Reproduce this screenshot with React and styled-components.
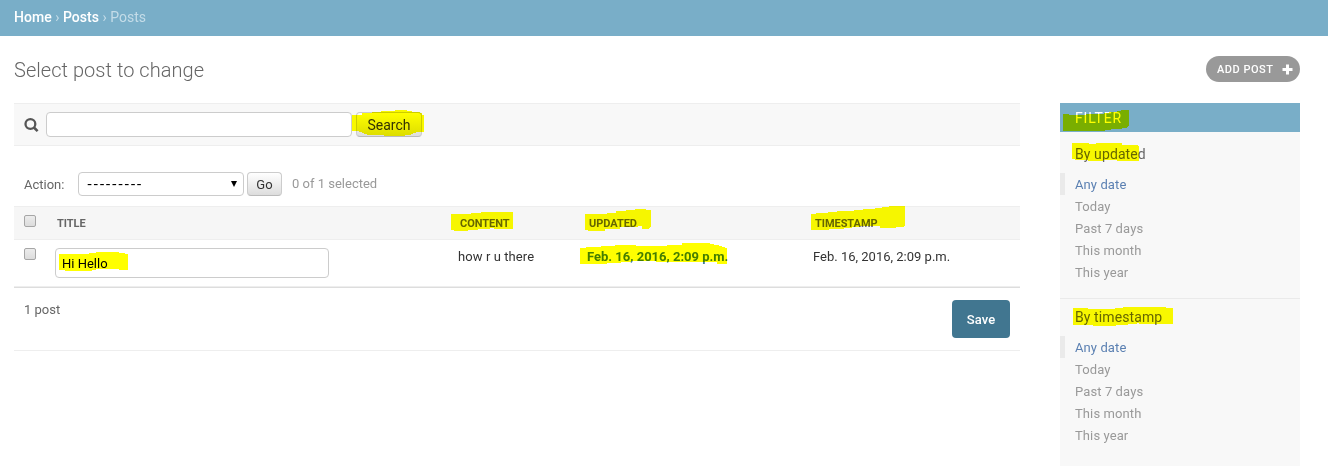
import React from "react";
import styled, { createGlobalStyle } from "styled-components";

const Global = createGlobalStyle`
  *, *::before, *::after { box-sizing: border-box; }
  body { margin: 0; background: #fff; overflow: hidden; }
  body, input, button { font-family: Roboto, "Liberation Sans", sans-serif; }
`;

const Page = styled.div`
  position: relative;
  width: 1328px;
  height: 469px;
  overflow: hidden;
  font-size: 13px;
  color: #333;
`;
const Text = styled.span`
  letter-spacing: ${(p) => p.$ls || 0}px;
  white-space: nowrap;
`;
const Dashes = styled.span`
  font-family: "DejaVu Sans", sans-serif;
  font-size: 14px;
  letter-spacing: 1.15px;
`;
const Breadcrumbs = styled.nav`
  height: 36px;
  padding: 0 14px;
  background: #79aec8;
  color: #c4dce8;
  font-size: 14px;
  line-height: 34px;
  letter-spacing: 0.03px;
  white-space: pre;
`;
const Crumb = styled.a`
  color: #fff;
  font-weight: 500;
`;
const TitleBar = styled.header`
  display: flex;
  justify-content: space-between;
  height: 67px;
  padding: 20px 28px 0 14px;
`;
const Title = styled.h1`
  margin: 0;
  font-size: 20px;
  font-weight: 300;
  line-height: 28px;
  letter-spacing: 0.04px;
  color: #666;
`;
const AddButton = styled.a`
  display: flex;
  align-items: center;
  justify-content: space-between;
  width: 94px;
  height: 26px;
  padding: 0 7px 0 11px;
  border-radius: 13px;
  background: #999;
  color: #fff;
  font-size: 11px;
  font-weight: 500;
`;
const Content = styled.div`
  display: flex;
  gap: 40px;
  padding-left: 14px;
`;
const Main = styled.main`
  width: 1006px;
`;
const Toolbar = styled.div`
  display: flex;
  align-items: center;
  height: 43px;
  padding-left: 10px;
  border-top: 1px solid #eee;
  border-bottom: 1px solid #eee;
  background: #f8f8f8;
`;
const Field = styled.input`
  display: block;
  width: ${(p) => p.$w}px;
  height: ${(p) => p.$h}px;
  margin: 0;
  padding: 0 6px;
  border: 1px solid #ccc;
  border-radius: 4px;
  background: #fff;
  color: #000;
  font-size: 13px;
  outline: none;
`;
const Button = styled.button`
  width: ${(p) => p.$w}px;
  height: ${(p) => p.$h}px;
  margin-left: ${(p) => p.$gap}px;
  padding: 1px 0 0;
  border: 1px solid #ccc;
  border-bottom-color: #bbb;
  border-radius: 4px;
  background: linear-gradient(#fff, #ddd);
  color: #333;
  font-size: ${(p) => p.$size}px;
`;
const Actions = styled.div`
  display: flex;
  align-items: center;
  height: 60px;
  padding: 16px 10px 0;
  color: #666;
`;
const ActionLabel = styled.label`
  width: 54px;
`;
const Select = styled.div`
  display: flex;
  align-items: center;
  justify-content: space-between;
  width: 166px;
  height: 24px;
  padding: 0 6px 0 8px;
  border: 1px solid #ccc;
  border-radius: 4px;
  color: #000;
`;
const Counter = styled.span`
  margin: -2px 0 0 10px;
  color: #999;
`;
const Row = styled.div`
  display: grid;
  grid-template-columns: 41px 403px 129px 226px 1fr;
  height: ${(p) => (p.$head ? 34 : 47)}px;
  border-top: ${(p) => (p.$head ? "1px solid #eee" : "0")};
  border-bottom: 1px solid #eee;
  background: ${(p) => (p.$head ? "#f6f6f6" : "#fff")};
`;
const HeadCell = styled.div`
  padding-left: 2px;
  line-height: 33px;
  font-size: 11px;
  font-weight: 700;
  letter-spacing: -0.05px;
  color: #666;
`;
const Cell = styled.div`
  line-height: 17px;
  padding-top: 8px;
  color: #333;
  font-weight: ${(p) => (p.$link ? 700 : 400)};
  ${(p) => p.$link && "color: #447e9b;"}
`;
const Check = styled.input`
  appearance: none;
  display: block;
  width: 12px;
  height: 12px;
  margin: 8px 0 0 10px;
  border: 1px solid #a6a6a6;
  border-radius: 2px;
  background: linear-gradient(#ececec, #dcdcdc);
`;
const Paginator = styled.footer`
  display: flex;
  justify-content: space-between;
  height: 64px;
  padding: 12px 10px 0;
  border-top: 1px solid #ddd;
  border-bottom: 1px solid #eee;
  color: #666;
  line-height: 20px;
`;
const Save = styled.button`
  width: 58px;
  height: 38px;
  padding: 0;
  border: 0;
  border-radius: 4px;
  background: #417690;
  color: #fff;
  font-size: 13px;
  font-weight: 500;
  letter-spacing: 0.1px;
`;
const Sidebar = styled.aside`
  width: 240px;
  height: 363px;
  background: #f8f8f8;
`;
const FilterTitle = styled.h2`
  height: 29px;
  margin: 0;
  padding-left: 15px;
  background: #79aec8;
  color: #fff;
  font-size: 14px;
  font-weight: 400;
  letter-spacing: 0.8px;
  line-height: 30px;
`;
const FilterGroup = styled.section`
  height: 167px;
  border-bottom: ${(p) => (p.$last ? "0" : "1px solid #eaeaea")};
  & + & { margin-top: -4px; }
`;
const FilterHeading = styled.h3`
  margin: 0;
  padding: 12px 15px 0;
  height: 41px;
  font-size: 14px;
  font-weight: 400;
  line-height: 20px;
  color: #666;
`;
const Choice = styled.a`
  display: block;
  height: 22px;
  line-height: 24px;
  padding-left: 10px;
  border-left: 5px solid ${(p) => (p.$on ? "#eaeaea" : "transparent")};
  color: ${(p) => (p.$on ? "#5b80b2" : "#999")};
`;
const Ink = styled.svg`
  position: absolute;
  inset: 0;
  pointer-events: none;
  mix-blend-mode: multiply;
`;

const strokes = [
  "352,115 362,115 362,113 381,112 381,111 395,111 395,110 407,110 407,111 417,112 422,113 422,115 424,115 424,132 417,132 410,135 400,136 368,135 361,132 357,131 352,131",
  "59,254 89,254 89,253 96,253 96,252 119,252 119,253 125,253 125,254 128,254 128,270 119,270 119,269 100,269 92,270 92,271 65,271 65,270 59,270",
  "451,214 471,214 471,213 481,213 481,212 513,212 513,229 494,229 494,228 490,228 490,229 478,229 478,230 468,230 468,231 454,231 454,230 451,230",
  "585,214 607,214 607,213 616,213 616,211 635,210 635,209 646,209 646,210 651,210 651,226 649,229 642,229 642,226 638,226 638,227 620,227 620,229 605,229 605,231 588,231 588,230 585,230",
  "580,248 586,248 586,247 601,247 601,246 628,245 644,246 667,246 667,245 682,245 682,243 710,243 710,244 717,245 727,248 727,264 717,264 717,262 671,262 641,261 621,262 621,263 607,263 607,264 580,264",
  "811,214 816,214 816,213 828,213 828,212 863,210 863,209 875,209 875,208 889,207 889,206 905,206 905,226 902,227 896,227 896,228 880,228 880,226 860,226 860,227 844,228 844,229 829,229 829,230 811,230",
  "1063,114 1069,114 1069,115 1086,115 1086,114 1104,114 1104,113 1113,112 1121,111 1121,110 1129,110 1129,126 1126,128 1117,129 1105,130 1105,131 1063,131",
  "1072,143 1089,143 1089,144 1096,144 1096,143 1122,143 1122,145 1136,145 1139,146 1139,161 1118,161 1115,160 1103,160 1103,161 1088,161 1088,160 1075,160 1075,159 1072,159",
  "1073,308 1088,308 1088,309 1115,309 1115,308 1123,308 1123,307 1166,307 1166,308 1173,308 1173,324 1139,324 1139,323 1137,323 1137,324 1128,324 1128,325 1116,325 1116,326 1093,326 1093,325 1073,325",
];

const choices = ["Any date", "Today", "Past 7 days", "This month", "This year"];

function Filter({ label, last }) {
  return (
    <FilterGroup $last={last}>
      <FilterHeading><Text $ls={0.1}>{label}</Text></FilterHeading>
      {choices.map((name, i) => (
        <Choice key={name} $on={i === 0}><Text $ls={0.1}>{name}</Text></Choice>
      ))}
    </FilterGroup>
  );
}

export default function App() {
  return (
    <Page>
      <Global />
      <Breadcrumbs>
        <Crumb>Home</Crumb> › <Crumb>Posts</Crumb> › Posts
      </Breadcrumbs>
      <TitleBar>
        <Title>Select post to change</Title>
        <AddButton>
          <Text $ls={0.5}>ADD POST</Text>
          <svg width="11" height="11" viewBox="0 0 11 11">
            <path d="M5.5 .5v10M.5 5.5h10" stroke="#fff" strokeWidth="3" />
          </svg>
        </AddButton>
      </TitleBar>
      <Content>
        <Main>
          <Toolbar>
            <svg width="22" height="16" viewBox="0 0 22 16" fill="none" stroke="#555">
              <circle cx="6.4" cy="7" r="4.9" strokeWidth="2.3" />
              <path d="M9.9 10.5l3.7 3.7" strokeWidth="2.6" />
            </svg>
            <Field $w={306} $h={25} />
            <Button $w={66} $h={25} $gap={4} $size={14}>Search</Button>
          </Toolbar>
          <Actions>
            <ActionLabel>Action:</ActionLabel>
            <Select>
              <Dashes>---------</Dashes>
              <svg width="6" height="6" viewBox="0 0 6 6"><path d="M0 0h6L3 6z" /></svg>
            </Select>
            <Button $w={35} $h={24} $gap={3} $size={13}>Go</Button>
            <Counter>0 of 1 selected</Counter>
          </Actions>
          <Row $head>
            <Check type="checkbox" />
            <HeadCell>TITLE</HeadCell>
            <HeadCell>CONTENT</HeadCell>
            <HeadCell>UPDATED</HeadCell>
            <HeadCell>TIMESTAMP</HeadCell>
          </Row>
          <Row>
            <Check type="checkbox" />
            <Cell><Field $w={274} $h={30} defaultValue="Hi Hello" /></Cell>
            <Cell><Text $ls={0.08}>how r u there</Text></Cell>
            <Cell $link>Feb. 16, 2016, 2:09 p.m.</Cell>
            <Cell>Feb. 16, 2016, 2:09 p.m.</Cell>
          </Row>
          <Paginator>
            <Text>1 post</Text>
            <Save>Save</Save>
          </Paginator>
        </Main>
        <Sidebar>
          <FilterTitle>FILTER</FilterTitle>
          <Filter label="By updated" />
          <Filter label="By timestamp" last />
        </Sidebar>
      </Content>
      <Ink width="1328" height="469" viewBox="0 0 1328 469" shapeRendering="crispEdges">
        {strokes.map((points) => (
          <polygon key={points} points={points} fill="#ff0" />
        ))}
      </Ink>
    </Page>
  );
}
